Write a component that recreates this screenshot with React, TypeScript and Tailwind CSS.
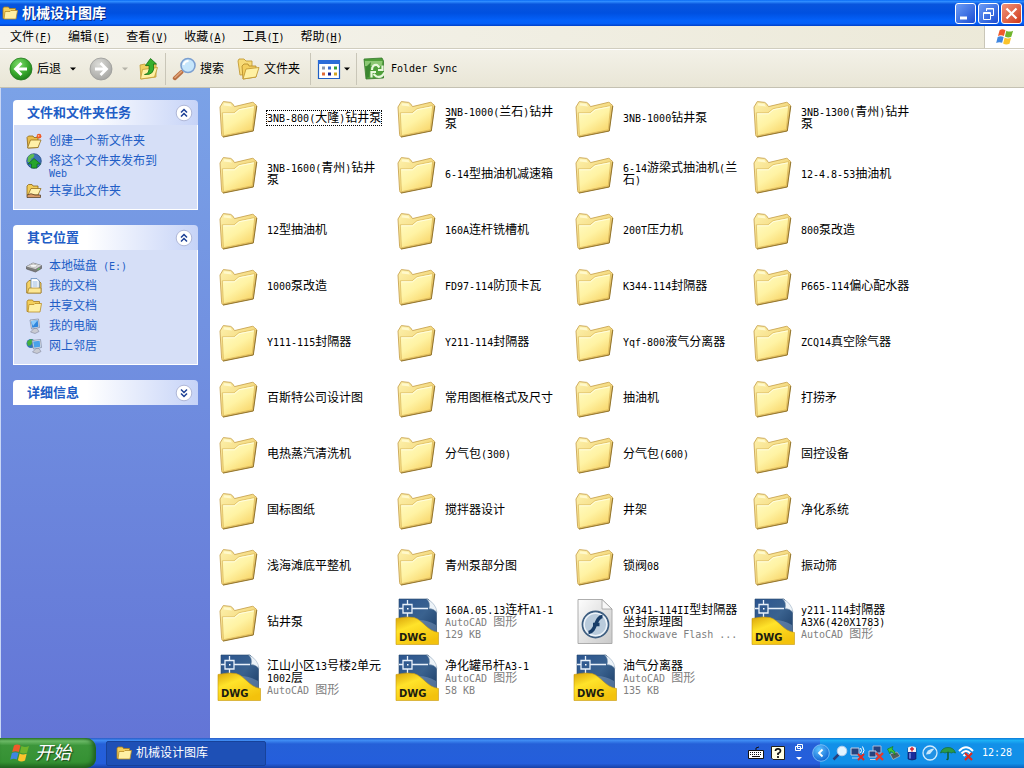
import React from 'react';
import type { ReactNode } from 'react';

type FileKind = 'folder' | 'dwg' | 'flash';

interface FileEntry {
  name: string;
  kind?: FileKind;
  details?: string[];
}

interface PlaceLink {
  label: string;
  icon: ReactNode;
}

const files: FileEntry[] = [
  { name: '3NB-800(大隆)钻井泵' },
  { name: '3NB-1000(兰石)钻井泵' },
  { name: '3NB-1000钻井泵' },
  { name: '3NB-1300(青州)钻井泵' },
  { name: '3NB-1600(青州)钻井泵' },
  { name: '6-14型抽油机减速箱' },
  { name: '6-14游梁式抽油机(兰石)' },
  { name: '12-4.8-53抽油机' },
  { name: '12型抽油机' },
  { name: '160A连杆铣槽机' },
  { name: '200T压力机' },
  { name: '800泵改造' },
  { name: '1000泵改造' },
  { name: 'FD97-114防顶卡瓦' },
  { name: 'K344-114封隔器' },
  { name: 'P665-114偏心配水器' },
  { name: 'Y111-115封隔器' },
  { name: 'Y211-114封隔器' },
  { name: 'Yqf-800液气分离器' },
  { name: 'ZCQ14真空除气器' },
  { name: '百斯特公司设计图' },
  { name: '常用图框格式及尺寸' },
  { name: '抽油机' },
  { name: '打捞矛' },
  { name: '电热蒸汽清洗机' },
  { name: '分气包(300)' },
  { name: '分气包(600)' },
  { name: '固控设备' },
  { name: '国标图纸' },
  { name: '搅拌器设计' },
  { name: '井架' },
  { name: '净化系统' },
  { name: '浅海滩底平整机' },
  { name: '青州泵部分图' },
  { name: '锁阀08' },
  { name: '振动筛' },
  { name: '钻井泵' },
  { name: '160A.05.13连杆A1-1', kind: 'dwg', details: ['AutoCAD 图形', '129 KB'] },
  { name: 'GY341-114II型封隔器坐封原理图', kind: 'flash', details: ['Shockwave Flash ...'] },
  { name: 'y211-114封隔器A3X6(420X1783)', kind: 'dwg', details: ['AutoCAD 图形'] },
  { name: '江山小区13号楼2单元1002层', kind: 'dwg', details: ['AutoCAD 图形'] },
  { name: '净化罐吊杆A3-1', kind: 'dwg', details: ['AutoCAD 图形', '58 KB'] },
  { name: '油气分离器', kind: 'dwg', details: ['AutoCAD 图形', '135 KB'] },
];

const menus = [
  ['文件', 'F'],
  ['编辑', 'E'],
  ['查看', 'V'],
  ['收藏', 'A'],
  ['工具', 'T'],
  ['帮助', 'H'],
];

// Latin runs are half as wide as a Chinese character
function Mixed({ text }: { text: string }) {
  return (
    <>
      {text.split(/([\x20-\x7e]+)/).filter(Boolean).map((part, i) =>
        /^[\x20-\x7e]/.test(part) ? (
          <span key={i} className="font-['DejaVu_Sans_Mono',monospace] text-[10px] leading-0">{part}</span>
        ) : (
          part
        )
      )}
    </>
  );
}

function Gradients() {
  return (
    <svg className="absolute h-0 w-0" aria-hidden="true">
      <defs>
        <linearGradient id="folderFront" x1="0" y1="0" x2="0.7" y2="1">
          <stop offset="0" stopColor="#fffcc8" />
          <stop offset="0.55" stopColor="#fff3a4" />
          <stop offset="1" stopColor="#f8d66a" />
        </linearGradient>
        <linearGradient id="folderBack" x1="0" y1="0" x2="1" y2="1">
          <stop offset="0" stopColor="#fdf1ac" />
          <stop offset="1" stopColor="#edc65a" />
        </linearGradient>
        <linearGradient id="dwgBlue" x1="0" y1="0" x2="1" y2="1">
          <stop offset="0" stopColor="#2b5590" />
          <stop offset="0.5" stopColor="#3a628f" />
          <stop offset="1" stopColor="#16365f" />
        </linearGradient>
        <linearGradient id="dwgYellow" x1="0" y1="0" x2="0.6" y2="1">
          <stop offset="0" stopColor="#d9a40c" />
          <stop offset="0.4" stopColor="#ffe32a" />
          <stop offset="1" stopColor="#f3c20c" />
        </linearGradient>
        <linearGradient id="page" x1="0" y1="0" x2="1" y2="1">
          <stop offset="0" stopColor="#fdfdfd" />
          <stop offset="1" stopColor="#c9c9c9" />
        </linearGradient>
        <radialGradient id="greenBall" cx="0.4" cy="0.3" r="0.75">
          <stop offset="0" stopColor="#7fdc6c" />
          <stop offset="0.6" stopColor="#37a82c" />
          <stop offset="1" stopColor="#1c7a1a" />
        </radialGradient>
        <radialGradient id="grayBall" cx="0.4" cy="0.3" r="0.75">
          <stop offset="0" stopColor="#dcdcd8" />
          <stop offset="1" stopColor="#a3a3a0" />
        </radialGradient>
        <radialGradient id="blueBall" cx="0.4" cy="0.3" r="0.75">
          <stop offset="0" stopColor="#5fc4ff" />
          <stop offset="1" stopColor="#0b5fd0" />
        </radialGradient>
      </defs>
    </svg>
  );
}

function FolderIcon() {
  return (
    <svg className="h-12 w-12 shrink-0" viewBox="0 0 48 48">
      <path d="M5 13L8.300 7.600L15.700 8.400Q17.500 9 19.500 12.600L37.500 8.300Q38.800 8.300 39.300 9.600L41.500 11.300L38 36.700L8 42.700Q6.800 42.500 6.600 40.500Z" fill="url(#folderBack)" stroke="#c9a553" strokeWidth="0.900" />
      <path d="M8.500 11.500L9.300 9.300L15.200 9.800L17 12.500Z" fill="#fff9cc" />
      <path d="M7.300 18.800H19L24 14.700L39.700 11.600L37.300 35.800L8.400 41.700Z" fill="url(#folderFront)" stroke="#d8b557" strokeWidth="0.700" />
      <path d="M8.300 19.800H19.400L24.400 15.700L38.700 12.900" fill="none" stroke="#fffee4" strokeWidth="0.900" />
      <path d="M8 43.100L38.300 37L41.800 12" fill="none" stroke="#94762c" strokeWidth="1" />
    </svg>
  );
}

function DwgIcon() {
  return (
    <svg className="h-12 w-12 shrink-0" viewBox="0 0 48 48">
      <path d="M6 1H35Q41 6 43.500 14V44H6Z" fill="url(#dwgBlue)" stroke="#27466d" strokeWidth="0.600" />
      <path d="M8 27Q26 17 43 27V38L20 23Z" fill="#7f9cc0" opacity="0.500" />
      <path d="M33.500 0.800Q38 5 36 10.500Q41 10.500 44 14.500Q43 5 33.500 0.800Z" fill="#edf3f8" stroke="#8fa5bb" strokeWidth="0.500" />
      <path d="M14.500 2V6.500M14.500 15V20M6 10.500H10M19 10.500H35M10 6.500H19V15H10Z" fill="none" stroke="#e9f1fa" strokeWidth="1.300" />
      <path d="M14 10H15.500V11.500H14Z" fill="#fff" />
      <path d="M3 20.500Q14 18 21 19.500C30 22 34 33 45.500 34.500V46.500H3Z" fill="url(#dwgYellow)" stroke="#c8990f" strokeWidth="0.600" />
      <text x="6" y="43" fontFamily="DejaVu Sans, sans-serif" fontSize="10" fontWeight="700" fill="#1c1c10">DWG</text>
    </svg>
  );
}

function FlashIcon() {
  return (
    <svg className="h-12 w-12 shrink-0" viewBox="0 0 48 48">
      <path d="M7 1.500H31L41 11V45.500H7Z" fill="url(#page)" stroke="#a5a5a5" strokeWidth="0.900" />
      <path d="M31 1.500V11H41Z" fill="#f8f8f8" stroke="#a0a0a0" strokeWidth="0.800" />
      <circle cx="24.500" cy="26.500" r="13" fill="#b9cbdc" stroke="#3e5e80" strokeWidth="1.800" />
      <circle cx="24.500" cy="26.500" r="11.300" fill="none" stroke="#eef4fa" strokeWidth="1.400" />
      <path d="M31.500 18.500C24 18.500 25.500 34 17.500 34.500M22 26.500H28.500" fill="none" stroke="#173c68" strokeWidth="3.400" />
    </svg>
  );
}

function SmallFolder({ className = 'h-4 w-4' }: { className?: string }) {
  return (
    <svg className={className} viewBox="0 0 16 16">
      <path d="M1 3.500L2 2H6.500L7.500 3.500H13.500V13.500H1Z" fill="#f3cf5b" stroke="#a87c1b" strokeWidth="0.800" />
      <path d="M3 6.500H8L9 5.500H15.500L14 14H2Z" fill="#fff0a4" stroke="#b98d26" strokeWidth="0.800" />
    </svg>
  );
}

function WindowsFlag({ className }: { className: string }) {
  return (
    <svg className={className} viewBox="0 0 22 20">
      <path d="M5 2.500Q8 0.500 11.500 2.500L9.800 9Q6.500 7.300 3.200 9Z" fill="#ef5a2a" />
      <path d="M12.500 3Q16 5 20 3L18 9.800Q14.500 11.500 10.900 9.500Z" fill="#6fb52c" />
      <path d="M2.900 10Q6 8.400 9.500 10L7.800 16.500Q4.500 14.800 1.200 16.800Z" fill="#3f86e0" />
      <path d="M10.600 10.600Q14 12.500 17.700 10.800L16 17.500Q12 19.400 8.900 17.200Z" fill="#fbc42c" />
    </svg>
  );
}

function NewFolderIcon() {
  return (
    <svg className="h-4 w-4 shrink-0" viewBox="0 0 16 16">
      <path d="M1 4.500L2.500 3H7L8 4.500H12V14.500L2 15Z" fill="#e9bd4a" stroke="#8d6413" strokeWidth="0.800" />
      <path d="M1.500 15L4.500 7H15L12 14.500Z" fill="#fff0a8" stroke="#96701d" strokeWidth="0.800" />
      <circle cx="13" cy="3.200" r="2.400" fill="#ef5a28" />
      <circle cx="12.600" cy="2.800" r="0.900" fill="#ffc09a" />
    </svg>
  );
}

function PublishIcon() {
  return (
    <svg className="h-4 w-4 shrink-0" viewBox="0 0 16 16">
      <circle cx="8" cy="8" r="7.300" fill="#3c72b8" stroke="#1c437c" strokeWidth="0.700" />
      <path d="M2 4Q5 0 8.500 1.500Q8 5 5.500 5.500L4 9L1.500 9Z" fill="#5ebc50" />
      <path d="M8 5.500L14.500 11H11V15H5.500V11H2Z" fill="#27a52b" stroke="#0f6815" strokeWidth="0.700" />
    </svg>
  );
}

function ShareIcon() {
  return (
    <svg className="h-4 w-4 shrink-0" viewBox="0 0 16 16">
      <path d="M1 3L2.500 1.500H6L7 3H12V12H1Z" fill="#f2cd5a" stroke="#8d6413" strokeWidth="0.800" />
      <path d="M2 12L5 5.500H15L12 12Z" fill="#fff2b0" stroke="#96701d" strokeWidth="0.800" />
      <path d="M1 12Q5 9.500 9 12L14.500 12V14.500H1Z" fill="#d99b67" stroke="#4d3518" strokeWidth="0.700" />
    </svg>
  );
}

function DiskIcon() {
  return (
    <svg className="h-4 w-4 shrink-0" viewBox="0 0 16 16">
      <path d="M0.500 8.500L7 5L15.500 7.500V10.500L9.500 14L0.500 11Z" fill="#7c7c7c" stroke="#4f4f4f" strokeWidth="0.600" />
      <path d="M0.500 8.500L7 5L15.500 7.500L9.500 11Z" fill="#d8d8d8" />
      <ellipse cx="7.500" cy="7.800" rx="3.600" ry="1.600" fill="#f6f6f6" stroke="#969696" strokeWidth="0.500" />
      <path d="M11.500 11.700L13.500 10.500" stroke="#5ce04b" strokeWidth="1" />
    </svg>
  );
}

function DocumentsIcon() {
  return (
    <svg className="h-4 w-4 shrink-0" viewBox="0 0 16 16">
      <path d="M0.700 5L3 2.500H12.500L15 5V15H0.700Z" fill="#f5d266" stroke="#95701c" strokeWidth="0.800" />
      <path d="M5 0.600H11L13.300 3V11.500H5Z" fill="#fff" stroke="#5680b6" strokeWidth="0.800" />
      <path d="M6.500 4H11.500M6.500 6H11.500M6.500 8H11.500" stroke="#7aa5d9" strokeWidth="0.800" />
      <path d="M3 10H15V15H1.500Z" fill="#fce795" stroke="#a57c20" strokeWidth="0.700" />
    </svg>
  );
}

function ComputerIcon() {
  return (
    <svg className="h-4 w-4 shrink-0" viewBox="0 0 16 16">
      <path d="M4 2L12.500 1L13.500 9.500L5.500 11Z" fill="#e5e5ea" stroke="#7a86a0" strokeWidth="0.700" />
      <path d="M5 3L11.700 2.200L12.400 8.700L6.300 9.700Z" fill="#2f86dd" />
      <path d="M5 3L11.700 2.200L7 8Z" fill="#8ccafa" />
      <path d="M8 10.500H11L13 13.500L9 15.500L4.500 14Z" fill="#c9cbd3" stroke="#82869a" strokeWidth="0.600" />
    </svg>
  );
}

function NetworkIcon() {
  return (
    <svg className="h-4 w-4 shrink-0" viewBox="0 0 16 16">
      <circle cx="5" cy="5.500" r="4.500" fill="#3275b8" />
      <path d="M1 4Q4 0 7 2L5 7L2 8Z" fill="#44b13c" />
      <path d="M6 2.500L14.500 1.500L15.500 9.500L7.500 11Z" fill="#e5e5ea" stroke="#7a86a0" strokeWidth="0.700" />
      <path d="M7 3.500L13.700 2.700L14.300 8.700L8.300 9.700Z" fill="#4aa2ea" />
      <path d="M10 10.500H13L15 13.500L11 15.500L6.500 14Z" fill="#c9cbd3" stroke="#82869a" strokeWidth="0.600" />
    </svg>
  );
}

function DropArrow({ color = '#000' }: { color?: string }) {
  return (
    <svg className="h-2 w-2 shrink-0" viewBox="0 0 8 8">
      <path d="M1 2.500H7L4 5.500Z" fill={color} />
    </svg>
  );
}

function Separator() {
  return <div className="h-8 w-px bg-[#c9c6b8]" />;
}

function TitleBar() {
  const box = 'flex h-[21px] w-[21px] items-center justify-center rounded-[3px] border border-white';
  return (
    <header className="flex h-[26px] shrink-0 items-center bg-[linear-gradient(to_bottom,#0a6cf5_0%,#2f8cff_6%,#0855dd_16%,#0050e0_50%,#0462fb_80%,#0560f8_90%,#0040c8_100%)] pr-[2px] pl-[2px]">
      <SmallFolder className="h-4 w-4" />
      <h1 className="ml-1 flex-1 text-[14px] leading-[20px] font-bold text-white [text-shadow:1px_1px_#0a2a86]">机械设计图库</h1>
      <div className="flex gap-[2px]">
        <button aria-label="最小化" className={`${box} bg-linear-to-br from-[#6d9cf5] to-[#1c4bd2]`}>
          <svg className="h-[19px] w-[19px]" viewBox="0 0 19 19"><path d="M4 12.500H11V15.500H4Z" fill="#fff" /></svg>
        </button>
        <button aria-label="还原" className={`${box} bg-linear-to-br from-[#6d9cf5] to-[#1c4bd2]`}>
          <svg className="h-[19px] w-[19px]" viewBox="0 0 19 19" fill="none" stroke="#fff">
            <path d="M7.500 7V4.500H14.500V11.500H12M7 5H15" />
            <path d="M4.500 8.500H11.500V15.500H4.500ZM4 9.500H12" />
          </svg>
        </button>
        <button aria-label="关闭" className={`${box} bg-linear-to-br from-[#f0937a] to-[#cf3511]`}>
          <svg className="h-[19px] w-[19px]" viewBox="0 0 19 19"><path d="M4.500 4.500L14.500 14.500M14.500 4.500L4.500 14.500" stroke="#fff" strokeWidth="2.200" /></svg>
        </button>
      </div>
    </header>
  );
}

function MenuBar() {
  return (
    <nav className="flex h-[23px] shrink-0 items-stretch border-b border-[#d0cdbf] bg-linear-to-r from-[#f5f4ee] to-[#ece9d8] pl-[2px]">
      {menus.map(([label, key]) => (
        <button key={key} className="px-2 text-[12px] leading-[20px]">
          {label}
          <span className="font-['DejaVu_Sans_Mono',monospace] text-[10px] leading-0">
            (<span className="underline">{key}</span>)
          </span>
        </button>
      ))}
      <div className="ml-auto flex w-10 items-center justify-center border-l border-[#c9c6b8] bg-white">
        <WindowsFlag className="h-[18px] w-5" />
      </div>
    </nav>
  );
}

function Toolbar() {
  return (
    <div className="flex h-[39px] shrink-0 items-center border-t border-b border-t-white border-b-[#c4c1b2] bg-linear-to-b from-[#f3f1e8] to-[#e9e6d6] pl-[9px] text-[12px]">
      <button className="flex items-center gap-1">
        <svg className="h-6 w-6" viewBox="0 0 24 24">
          <circle cx="12" cy="12" r="11" fill="url(#greenBall)" stroke="#247a20" strokeWidth="0.800" />
          <path d="M12.500 6L6.500 12L12.500 18M7 12H18" fill="none" stroke="#fff" strokeWidth="2.800" />
        </svg>
        后退
      </button>
      <button aria-label="后退历史" className="ml-2"><DropArrow /></button>
      <button aria-label="前进" className="ml-3">
        <svg className="h-6 w-6" viewBox="0 0 24 24">
          <circle cx="12" cy="12" r="11" fill="url(#grayBall)" stroke="#9b9b98" strokeWidth="0.800" />
          <path d="M11.500 6L17.500 12L11.500 18M17 12H6" fill="none" stroke="#fff" strokeWidth="2.800" />
        </svg>
      </button>
      <button aria-label="前进历史" className="ml-2"><DropArrow color="#b4b2a8" /></button>
      <button aria-label="向上" className="ml-2">
        <svg className="h-6 w-6" viewBox="0 0 24 24">
          <path d="M3 8L8 7L9 9L19 7V20L4 22Z" fill="#f2cf5e" stroke="#c29a34" strokeWidth="0.800" />
          <path d="M3.500 22L5.500 12.500L20.500 10.500L17.500 20Z" fill="#fff0a2" stroke="#c29a34" strokeWidth="0.800" />
          <path d="M7.500 17.500Q13 17 12 8.500H8.500L13.500 1.500L19.500 7H16.500Q18.500 18.500 7.500 17.500Z" fill="#35b02c" stroke="#176f14" strokeWidth="0.800" />
        </svg>
      </button>
      <div className="ml-1"><Separator /></div>
      <button className="ml-[6px] flex items-center gap-1">
        <svg className="h-6 w-6" viewBox="0 0 24 24">
          <path d="M2.800 21.200L9.500 15" stroke="#b86f42" strokeWidth="4" strokeLinecap="round" />
          <path d="M3 20.500L9.500 14.500" stroke="#e0a47a" strokeWidth="1.600" strokeLinecap="round" />
          <circle cx="16" cy="8.500" r="7" fill="#c6e6fb" stroke="#7b9fd0" strokeWidth="1.600" />
          <path d="M11.500 8Q12.500 4 16.500 4" fill="none" stroke="#fff" strokeWidth="2" />
        </svg>
        搜索
      </button>
      <button className="ml-3 flex items-center gap-1">
        <svg className="h-6 w-6" viewBox="0 0 24 24">
          <path d="M2 4L3 2H8L10 4L16 4V17L4 18Z" fill="#f8db77" stroke="#c39b35" strokeWidth="0.900" />
          <path d="M6 9L8 7H12L13 9H20V20L7 22Z" fill="#f4ce5c" stroke="#b88f2c" strokeWidth="0.900" />
          <path d="M7 22L10 12L23 10.500L20 20Z" fill="#fff1a3" stroke="#c39b35" strokeWidth="0.900" />
        </svg>
        文件夹
      </button>
      <div className="ml-[10px]"><Separator /></div>
      <button aria-label="查看" className="ml-[6px] flex items-center gap-[2px]">
        <svg className="h-6 w-6" viewBox="0 0 24 24">
          <path d="M1.500 3.500H22.500V21.500H1.500Z" fill="#fff" stroke="#1f5fc4" strokeWidth="1.200" />
          <path d="M1 3H23V7H1Z" fill="#2b6cd8" />
          <path d="M5 9.500H8V12.500H5Z" fill="#8a98b0" />
          <path d="M11 9.500H14V12.500H11Z" fill="#3a6cd0" />
          <path d="M17 9.500H20V12.500H17Z" fill="#35a035" />
          <path d="M5 15.500H8V18.500H5Z" fill="#e06a35" />
          <path d="M11 15.500H14V18.500H11Z" fill="#16208c" />
          <path d="M17 15.500H20V18.500H17Z" fill="#d3a522" />
        </svg>
        <DropArrow />
      </button>
      <div className="ml-[5px]"><Separator /></div>
      <button className="ml-[6px] flex items-center gap-1">
        <svg className="h-6 w-6" viewBox="0 0 24 24">
          <path d="M1 2L19 1L20.500 4V21L3 22Z" fill="#4f9f3a" stroke="#34782a" strokeWidth="0.800" />
          <path d="M2 4H19.500L18.500 9H2Z" fill="#8cc874" />
          <path d="M3 10L8 5L6 20L3 21Z" fill="#3b8630" />
          <path d="M9 13Q9 7.500 14 8L16.500 10.500M19.500 8.500V13H15M21.500 15.500Q19 21 13.500 19.500L10.500 17M8.500 20.500V15H13" fill="none" stroke="#e8f8dc" strokeWidth="2.200" />
        </svg>
        <Mixed text="Folder Sync" />
      </button>
    </div>
  );
}

function Panel({ title, open = true, links }: { title: string; open?: boolean; links?: PlaceLink[] }) {
  return (
    <section>
      <div className="flex h-[25px] items-center justify-between rounded-t-[4px] bg-linear-to-r from-white from-40% to-[#c6d3f7] pr-[5px] pl-[14px]">
        <h2 className="text-[13px] leading-[18px] font-bold text-[#215dc6]">{title}</h2>
        <button aria-label={`${open ? '折叠' : '展开'}${title}`}>
          <svg className="h-[18px] w-[18px]" viewBox="0 0 18 18">
            <circle cx="9" cy="9" r="7.800" fill="#fff" stroke="#b0b8d8" />
            <path
              d={open ? 'M6 8.500L9 5.500L12 8.500M6 12.500L9 9.500L12 12.500' : 'M6 5.500L9 8.500L12 5.500M6 9.500L9 12.500L12 9.500'}
              fill="none"
              stroke="#1c3f95"
              strokeWidth="1.500"
            />
          </svg>
        </button>
      </div>
      {links && (
        <ul className="flex flex-col gap-1 border border-t-0 border-white bg-[#d6dff7] px-3 pt-2 pb-[10px]">
          {links.map(link => (
            <li key={link.label}>
              <a href="#" className="flex items-start gap-[7px] text-[12px] leading-[12px] text-[#215dc6]">
                {link.icon}
                <span className="w-[114px] pt-[2px]"><Mixed text={link.label} /></span>
              </a>
            </li>
          ))}
        </ul>
      )}
    </section>
  );
}

function Sidebar() {
  return (
    <aside className="flex w-[210px] shrink-0 flex-col gap-[15px] border-l border-[#c8d6f5] bg-linear-to-b from-[#7ba2e7] to-[#6375d6] pt-3 pr-3 pl-3">
      <Panel
        title="文件和文件夹任务"
        links={[
          { label: '创建一个新文件夹', icon: <NewFolderIcon /> },
          { label: '将这个文件夹发布到 Web', icon: <PublishIcon /> },
          { label: '共享此文件夹', icon: <ShareIcon /> },
        ]}
      />
      <Panel
        title="其它位置"
        links={[
          { label: '本地磁盘 (E:)', icon: <DiskIcon /> },
          { label: '我的文档', icon: <DocumentsIcon /> },
          { label: '共享文档', icon: <SmallFolder className="h-4 w-4 shrink-0" /> },
          { label: '我的电脑', icon: <ComputerIcon /> },
          { label: '网上邻居', icon: <NetworkIcon /> },
        ]}
      />
      <Panel title="详细信息" open={false} />
    </aside>
  );
}

function FileTile({ file, focused }: { file: FileEntry; focused: boolean }) {
  return (
    <button className="flex h-14 items-center gap-1 text-left text-[12px] leading-[12px]">
      {file.kind === 'dwg' ? <DwgIcon /> : file.kind === 'flash' ? <FlashIcon /> : <FolderIcon />}
      <span className="w-[118px]">
        <span className={focused ? 'block w-fit py-px outline-1 outline-dotted outline-black' : 'block'}>
          <Mixed text={file.name} />
        </span>
        {file.details?.map(line => (
          <span key={line} className="block text-[#808080]"><Mixed text={line} /></span>
        ))}
      </span>
    </button>
  );
}

function Tray() {
  return (
    <div className="flex h-full items-center bg-[linear-gradient(to_bottom,#0c79d8_0%,#1cb0f5_8%,#1290e8_20%,#1290e8_85%,#0b62bd_100%)] pr-3">
      <button aria-label="显示隐藏的图标" className="-ml-2">
        <svg className="h-[18px] w-[18px]" viewBox="0 0 18 18">
          <circle cx="9" cy="9" r="8.300" fill="url(#blueBall)" stroke="#8cc8f8" strokeWidth="0.800" />
          <path d="M10.500 5.500L7 9L10.500 12.500" fill="none" stroke="#fff" strokeWidth="1.800" />
        </svg>
      </button>
      <div className="ml-[2px] flex gap-[2px]">
        <svg className="h-4 w-4" viewBox="0 0 16 16">
          <path d="M1.500 14.500L7 9" stroke="#27407c" strokeWidth="2.500" />
          <circle cx="10" cy="6" r="4.800" fill="#e4f4ff" stroke="#b5cdea" />
        </svg>
        <svg className="h-4 w-4" viewBox="0 0 16 16">
          <path d="M1 3H9V10H1ZM2 13H9" fill="#26437e" stroke="#c3cfe5" />
          <path d="M10.500 3Q12.500 5.500 10.500 8M12.500 1.500Q15.500 5.500 12.500 9" fill="none" stroke="#fff" />
          <path d="M8 9L14 15M14 9L8 15" stroke="#e02a20" strokeWidth="2" />
        </svg>
        <svg className="h-4 w-4" viewBox="0 0 16 16">
          <path d="M5 1H13V8H5Z" fill="#26437e" stroke="#a9b9d8" />
          <path d="M1 6H8V12H1ZM2 14.500H8" fill="#26437e" stroke="#c3cfe5" />
          <path d="M8 8L15 15M15 8L8 15" stroke="#e8372a" strokeWidth="2.400" />
        </svg>
        <svg className="h-4 w-4" viewBox="0 0 16 16">
          <path d="M4 9L11 7L14 11L7 14.500Z" fill="#515b5b" stroke="#b8c0c0" strokeWidth="0.700" />
          <path d="M1.500 4L7 1.500L6 4Q10 6 9 10Q7 6.500 4.500 6.500L4 9Z" fill="#3fc73b" stroke="#147218" strokeWidth="0.600" />
        </svg>
        <svg className="h-4 w-4" viewBox="0 0 16 16">
          <path d="M4 3Q8 0 12 3V14Q8 16 4 14Z" fill="#182c9c" stroke="#0d174f" strokeWidth="0.600" />
          <path d="M4 2.500Q8 0 12 2.500V7H4Z" fill="#f5f0f2" />
          <path d="M8 2V6.500M6 4H10" stroke="#d42030" strokeWidth="1.400" />
          <path d="M6 8V13.500" stroke="#8fa4f4" strokeWidth="1.200" />
        </svg>
        <svg className="h-4 w-4" viewBox="0 0 16 16">
          <circle cx="8" cy="8" r="7" fill="#2191e4" stroke="#d2ebfc" strokeWidth="1.300" />
          <path d="M12.500 3.500L8 9L4 9.500Q5 4 12.500 3.500Z" fill="#c8e8fc" />
        </svg>
        <svg className="h-4 w-4" viewBox="0 0 16 16">
          <path d="M0.500 8Q2 2.500 8 2.500Q14 2.500 15.500 8Q13 6.500 11.500 8Q8 6 5 8Q3 6.500 0.500 8Z" fill="#2c9a45" stroke="#126428" strokeWidth="0.600" />
          <path d="M8 7V13.500Q8 15 6.500 14" fill="none" stroke="#0f5f2a" strokeWidth="1.500" />
        </svg>
        <svg className="h-4 w-4" viewBox="0 0 16 16" fill="none">
          <path d="M1 6Q8 -1.500 15 6M3.500 8.500Q8 3.500 12.500 8.500M5.500 11Q8 8 10.500 11" stroke="#fff" strokeWidth="2" />
          <path d="M7 8L14 15M14 8L7 15" stroke="#e02a20" strokeWidth="2.200" />
        </svg>
      </div>
      <time className="ml-2 font-['DejaVu_Sans_Mono',monospace] text-[10px] leading-[12px] text-white">12:28</time>
    </div>
  );
}

function Taskbar() {
  return (
    <footer className="flex h-[30px] shrink-0 items-center bg-[linear-gradient(to_bottom,#2a5bc6_0%,#3f8cf3_8%,#2560d8_20%,#245edc_85%,#1941a5_100%)]">
      <button className="flex h-full w-24 items-center gap-1 rounded-r-[10px] bg-[linear-gradient(to_bottom,#2f7d2f_0%,#6dbb68_10%,#3c963a_25%,#359133_80%,#256f24_100%)] pl-[9px] shadow-[inset_-3px_-1px_4px_#1f5f1f]">
        <WindowsFlag className="h-5 w-[22px]" />
        <span className="text-[18px] leading-[22px] text-white italic [text-shadow:1px_1px_1px_#1d451c]">开始</span>
      </button>
      <button className="ml-[10px] flex h-[25px] w-40 items-center gap-1 rounded-[2px] border border-[#17429a] bg-[#1e50b6] pl-[9px] text-[12px] text-white">
        <SmallFolder />
        机械设计图库
      </button>
      <div className="ml-auto flex items-center pr-[17px]">
        <svg className="h-4 w-4" viewBox="0 0 16 16">
          <path d="M8 5V3L11 2" fill="none" stroke="#111" />
          <path d="M0.500 5.500H15.500V13.500H0.500Z" fill="#fff" stroke="#111" />
          <path d="M2 7.500H14M2 9.500H14" stroke="#111" strokeDasharray="1 1" />
          <path d="M4 11.500H12" stroke="#111" />
        </svg>
        <svg className="ml-[6px] h-4 w-4" viewBox="0 0 16 16">
          <path d="M1.500 1.500H14.500V14.500H3L1.500 13Z" fill="#ffffe6" stroke="#20201a" />
          <path d="M5.500 6Q5.500 3.800 8 3.800Q10.500 3.800 10.500 6Q10.500 7.500 8 8.500V10M8 11V13" fill="none" stroke="#111" strokeWidth="1.700" />
        </svg>
        <svg className="ml-[9px] h-5 w-2" viewBox="0 0 8 20">
          <path d="M2.500 1.500H7.500V5.500H2.500ZM0.500 3.500H5.500V7.500H0.500Z" fill="#2560d8" stroke="#fff" />
          <path d="M1 14H7L4 17Z" fill="#fff" />
        </svg>
      </div>
      <Tray />
    </footer>
  );
}

export default function App() {
  return (
    <div className="flex min-h-screen flex-col bg-white font-['Liberation_Sans','Noto_Sans_CJK_SC',sans-serif] text-black">
      <Gradients />
      <TitleBar />
      <MenuBar />
      <Toolbar />
      <main className="flex flex-1">
        <Sidebar />
        <div className="grid flex-1 auto-rows-[56px] grid-cols-[repeat(auto-fill,178px)] content-start pt-[2px] pl-[5px]">
          {files.map((file, i) => (
            <FileTile key={file.name} file={file} focused={i === 0} />
          ))}
        </div>
      </main>
      <Taskbar />
    </div>
  );
}
